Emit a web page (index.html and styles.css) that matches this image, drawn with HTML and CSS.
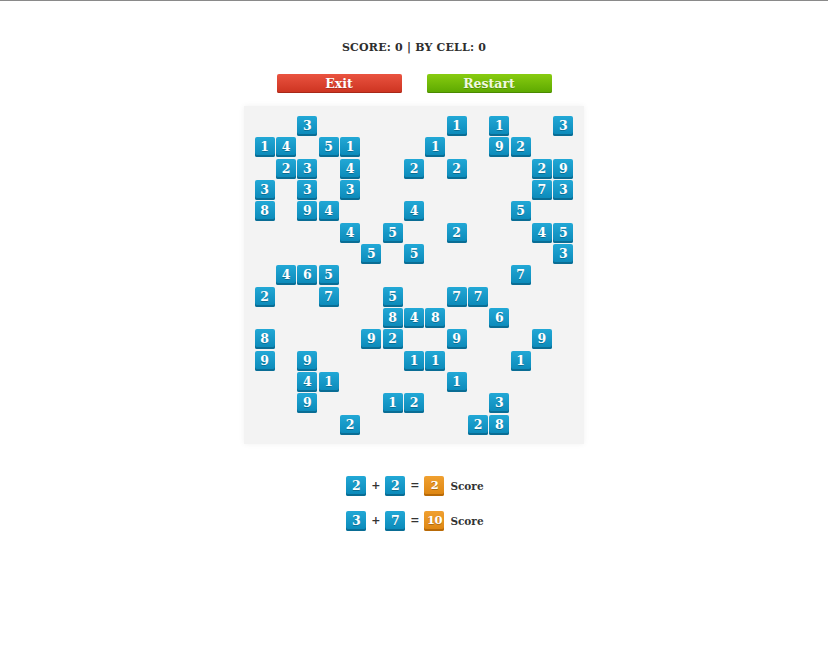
FILE: index.html
```html
<!DOCTYPE html>
<html>
<head>
<meta charset="utf-8">
<link rel="stylesheet" href="styles.css">
</head>
<body>
<div class="page">
  <div class="score">SCORE: 0 | BY CELL: 0</div>
  <div class="buttons">
    <button class="btn exit">Exit</button>
    <button class="btn restart">Restart</button>
  </div>
  <div class="board">
    <div class="grid">
      <i></i><i></i><b>3</b><i></i><i></i><i></i><i></i><i></i><i></i><b>1</b><i></i><b>1</b><i></i><i></i><b>3</b>
      <b>1</b><b>4</b><i></i><b>5</b><b>1</b><i></i><i></i><i></i><b>1</b><i></i><i></i><b>9</b><b>2</b><i></i><i></i>
      <i></i><b>2</b><b>3</b><i></i><b>4</b><i></i><i></i><b>2</b><i></i><b>2</b><i></i><i></i><i></i><b>2</b><b>9</b>
      <b>3</b><i></i><b>3</b><i></i><b>3</b><i></i><i></i><i></i><i></i><i></i><i></i><i></i><i></i><b>7</b><b>3</b>
      <b>8</b><i></i><b>9</b><b>4</b><i></i><i></i><i></i><b>4</b><i></i><i></i><i></i><i></i><b>5</b><i></i><i></i>
      <i></i><i></i><i></i><i></i><b>4</b><i></i><b>5</b><i></i><i></i><b>2</b><i></i><i></i><i></i><b>4</b><b>5</b>
      <i></i><i></i><i></i><i></i><i></i><b>5</b><i></i><b>5</b><i></i><i></i><i></i><i></i><i></i><i></i><b>3</b>
      <i></i><b>4</b><b>6</b><b>5</b><i></i><i></i><i></i><i></i><i></i><i></i><i></i><i></i><b>7</b><i></i><i></i>
      <b>2</b><i></i><i></i><b>7</b><i></i><i></i><b>5</b><i></i><i></i><b>7</b><b>7</b><i></i><i></i><i></i><i></i>
      <i></i><i></i><i></i><i></i><i></i><i></i><b>8</b><b>4</b><b>8</b><i></i><i></i><b>6</b><i></i><i></i><i></i>
      <b>8</b><i></i><i></i><i></i><i></i><b>9</b><b>2</b><i></i><i></i><b>9</b><i></i><i></i><i></i><b>9</b><i></i>
      <b>9</b><i></i><b>9</b><i></i><i></i><i></i><i></i><b>1</b><b>1</b><i></i><i></i><i></i><b>1</b><i></i><i></i>
      <i></i><i></i><b>4</b><b>1</b><i></i><i></i><i></i><i></i><i></i><b>1</b><i></i><i></i><i></i><i></i><i></i>
      <i></i><i></i><b>9</b><i></i><i></i><i></i><b>1</b><b>2</b><i></i><i></i><i></i><b>3</b><i></i><i></i><i></i>
      <i></i><i></i><i></i><i></i><b>2</b><i></i><i></i><i></i><i></i><i></i><b>2</b><b>8</b><i></i><i></i><i></i>
    </div>
  </div>
  <div class="legend">
    <div class="rule">
      <span class="tile">2</span><span class="op">+</span><span class="tile">2</span><span class="op">=</span><span class="tile orange">2</span><span class="label">Score</span>
    </div>
    <div class="rule">
      <span class="tile">3</span><span class="op">+</span><span class="tile">7</span><span class="op">=</span><span class="tile orange">10</span><span class="label">Score</span>
    </div>
  </div>
</div>
</body>
</html>
```
FILE: styles.css
```css
html, body {
  margin: 0;
  padding: 0;
  background: #ffffff;
}
body {
  border-top: 1px solid #8a8a8a;
  font-family: "DejaVu Serif", "Liberation Serif", serif;
  color: #333;
}
.page {
  width: 828px;
  display: flex;
  flex-direction: column;
  align-items: center;
}
.score {
  margin-top: 40px;
  font-size: 11px;
  font-weight: bold;
  line-height: 14px;
  color: #2e2e2e;
  letter-spacing: 0.2px;
}
.buttons {
  margin-top: 19px;
  display: flex;
  gap: 25px;
}
.btn {
  width: 125px;
  height: 19px;
  padding: 0;
  border: none;
  border-radius: 2px;
  font-family: "DejaVu Serif", serif;
  font-weight: bold;
  font-size: 12.5px;
  line-height: 19px;
  color: #fff;
  text-shadow: 0 1px 0 rgba(0,0,0,0.2);
}
.exit {
  background: linear-gradient(#ea5340, #cc3320);
  box-shadow: inset 0 -1px 0 #a82818;
}
.restart {
  background: linear-gradient(#88cc10, #5ca800);
  box-shadow: inset 0 -1px 0 #4a8a00;
  color: #f0f8e0;
}
.board {
  margin-top: 13px;
  padding: 10px 11px 9px;
  background: #f3f3f3;
  box-shadow: 0 0 6px rgba(0,0,0,0.06);
}
.grid {
  display: grid;
  grid-template-columns: repeat(15, 20px);
  grid-auto-rows: 20px;
  gap: 1.33px;
}
.grid i, .grid b, .tile {
  display: block;
  width: 20px;
  height: 20px;
}
.grid b, .tile {
  box-sizing: border-box;
  border-radius: 2px;
  background: linear-gradient(#22a8d6, #0a88b8);
  box-shadow: inset 0 -2px 0 #0a6d94;
  color: #fff;
  font-family: "DejaVu Serif", serif;
  font-weight: bold;
  font-size: 12.5px;
  line-height: 19px;
  text-align: center;
  text-shadow: 0 1px 0 rgba(0,0,0,0.25);
}
.legend {
  margin-top: 32px;
  padding-left: 2px;
  display: flex;
  flex-direction: column;
  gap: 15px;
}
.rule {
  display: flex;
  align-items: center;
}
.op {
  width: 19px;
  text-align: center;
  font-size: 11px;
  font-weight: bold;
  color: #333;
}
.tile.orange {
  background: linear-gradient(#f0a030, #dc8410);
  box-shadow: inset 0 -2px 0 #b86a08;
  font-size: 11.5px;
  letter-spacing: -0.7px;
}
.label {
  margin-left: 6px;
  font-size: 10.5px;
  font-weight: bold;
  color: #333;
}
```
